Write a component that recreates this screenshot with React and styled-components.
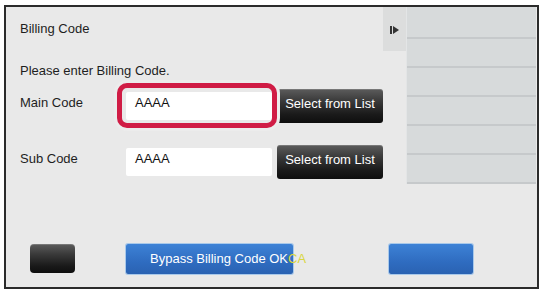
import React from "react";
import styled, { createGlobalStyle } from "styled-components";

const Global = createGlobalStyle`
  html, body { margin: 0; padding: 0; background: #ffffff; }
  body { font-family: "Liberation Sans", Arial, sans-serif; }
`;

const Frame = styled.div`
  box-sizing: border-box;
  margin: 5px 0 0 4px;
  width: 535px;
  height: 284px;
  border: 2px solid #2b2b2b;
  background: #e9e9e9;
  display: flex;
  flex-direction: column;
  position: relative;
`;

const Top = styled.div`
  display: flex;
  height: 177px;
`;

const Left = styled.div`
  position: relative;
  width: 400px;
  box-sizing: border-box;
  padding: 14px 0 0 14px;
  display: flex;
  flex-direction: column;
`;

const Text = styled.div`
  font-size: 13px;
  line-height: 15px;
  color: #1e1e1e;
  margin-top: ${(p) => p.$mt || 0}px;
`;

const Row = styled.div`
  display: flex;
  align-items: flex-start;
  height: 34px;
  margin-top: ${(p) => p.$mt || 0}px;
`;

const Label = styled.div`
  width: 106px;
  margin-top: 6px;
  font-size: 13px;
  line-height: 15px;
  color: #1e1e1e;
`;

const InputWrap = styled.div`
  position: relative;
  margin-top: 3px;
  width: 146px;
  height: 28px;
`;

const Input = styled.div`
  box-sizing: border-box;
  width: 100%;
  height: 100%;
  background: #ffffff;
  border-radius: 2px;
  padding: 3px 0 0 9px;
  font-size: 13px;
  line-height: 15px;
  color: #111;
`;

const Ring = styled.div`
  position: absolute;
  left: -9px;
  top: -9px;
  right: -5px;
  bottom: -8px;
  border: 5px solid #d01c45;
  border-radius: 10px;
  box-shadow: 0 0 0 3px #ececec;
  pointer-events: none;
  z-index: 2;
`;

const DarkButton = styled.div`
  box-sizing: border-box;
  margin-left: 5px;
  width: ${(p) => p.$w || 106}px;
  height: ${(p) => p.$h || 34}px;
  border-radius: 3px;
  background: linear-gradient(#5c5c5c 0%, #3a3a3a 35%, #1a1a1a 75%, #0e0e0e 100%);
  box-shadow: inset 0 1px 0 rgba(255, 255, 255, 0.18);
  color: #fff;
  font-size: 13px;
  line-height: 15px;
  padding-top: 7px;
  text-align: center;
  white-space: nowrap;
`;

const Tab = styled.div`
  position: absolute;
  right: 0;
  top: 0;
  width: 23px;
  height: 44px;
  background: #dcdddd;
  display: flex;
  justify-content: center;
  padding-top: 19px;
  box-sizing: border-box;
`;

const Panel = styled.div`
  width: 130px;
  background: #d7dadb;
  border-left: 1px solid #e3e5e6;
  box-sizing: border-box;
  display: flex;
  flex-direction: column;
`;

const PanelRow = styled.div`
  height: ${(p) => p.$h}px;
  border-bottom: 2px solid #c6c9cb;
`;

const Bottom = styled.div`
  display: flex;
  align-items: flex-start;
  margin-top: 60px;
  padding-left: 24px;
`;

const Blue = styled.div`
  box-sizing: border-box;
  margin-left: ${(p) => p.$ml}px;
  width: ${(p) => p.$w}px;
  height: 30px;
  border-radius: 2px;
  background: linear-gradient(#3d82d6, #2f6cc0 60%, #2a62b2);
  box-shadow: 0 0 0 1px #a9c9ea;
  color: #fff;
  font-size: 13px;
  line-height: 15px;
  padding: 7px 0 0 24px;
  white-space: nowrap;
  overflow: visible;
`;

const Yellow = styled.span`
  color: #d9d640;
`;

const BottomDark = styled(DarkButton)`
  margin-left: 0;
  border-radius: 4px;
`;

const TabIcon = () => (
  <svg width="9" height="8" viewBox="0 0 9 8">
    <rect x="0" y="0" width="2" height="8" fill="#333" />
    <path d="M3 0 L9 4 L3 8 Z" fill="#333" />
  </svg>
);

export default function App() {
  return (
    <>
      <Global />
      <Frame>
        <Top>
          <Left>
            <Text>Billing Code</Text>
            <Text $mt={27}>Please enter Billing Code.</Text>
            <Row $mt={11}>
              <Label>Main Code</Label>
              <InputWrap>
                <Input>AAAA</Input>
                <Ring />
              </InputWrap>
              <DarkButton>Select from List</DarkButton>
            </Row>
            <Row $mt={22}>
              <Label>Sub Code</Label>
              <InputWrap>
                <Input>AAAA</Input>
              </InputWrap>
              <DarkButton>Select from List</DarkButton>
            </Row>
            <Tab>
              <TabIcon />
            </Tab>
          </Left>
          <Panel>
            <PanelRow $h={30} />
            <PanelRow $h={27} />
            <PanelRow $h={27} />
            <PanelRow $h={27} />
            <PanelRow $h={27} />
            <PanelRow $h={27} />
          </Panel>
        </Top>
        <Bottom>
          <BottomDark $w={45} $h={29} />
          <Blue $ml={51} $w={167}>
            Bypass Billing Code OK<Yellow>CA</Yellow>
          </Blue>
          <Blue $ml={96} $w={84} />
        </Bottom>
      </Frame>
    </>
  );
}
